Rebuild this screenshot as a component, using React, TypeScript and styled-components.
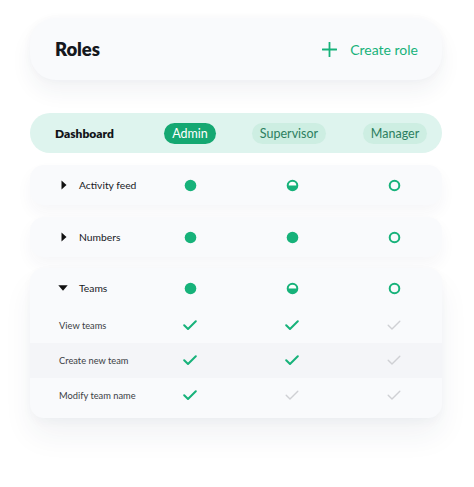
import React from "react";
import styled, { createGlobalStyle } from "styled-components";

const Global = createGlobalStyle`
  html, body { margin: 0; padding: 0; background: #ffffff; }
  body { font-family: "Lato", "Noto Sans", sans-serif; -webkit-font-smoothing: antialiased; }
`;

const GREEN = "#17b27a";

const Page = styled.div`
  width: 474px;
  height: 487px;
  box-sizing: border-box;
  padding: 18px 32px 0 30px;
  display: flex;
  flex-direction: column;
  overflow: hidden;
`;

const TitleCard = styled.div`
  height: 62px;
  border-radius: 26px;
  background: #f9fafc;
  box-shadow: 0 12px 22px rgba(40, 50, 90, 0.06), 0 0 10px rgba(40, 50, 90, 0.03);
  display: flex;
  align-items: center;
  justify-content: space-between;
  padding: 0 24px 0 25px;
  margin-bottom: 33px;
`;

const Title = styled.h1`
  margin: 0;
  font-size: 18.5px;
  font-weight: 800;
  color: #15171c;
  letter-spacing: -0.1px;
`;

const CreateButton = styled.button`
  border: none;
  background: none;
  padding: 0;
  display: flex;
  align-items: center;
  gap: 13px;
  font-family: inherit;
  font-size: 14px;
  color: ${GREEN};
  cursor: pointer;
`;

const HeaderBar = styled.div`
  height: 40px;
  border-radius: 20px;
  background: #def4ee;
  display: grid;
  grid-template-columns: 84px 102px 102px 102px;
  align-items: center;
  padding-left: 25px;
  margin-bottom: 12px;
`;

const HeaderLabel = styled.div`
  font-size: 12px;
  font-weight: 800;
  color: #111318;
`;

const Pill = styled.div<{ $active?: boolean; $shift?: number }>`
  justify-self: center;
  height: 21px;
  padding: 0 8px;
  border-radius: 11px;
  display: flex;
  align-items: center;
  font-size: 12.5px;
  margin-left: ${(p) => (p.$shift ?? 0) * 2}px;
  background: ${(p) => (p.$active ? "#15a872" : "#cdeee2")};
  color: ${(p) => (p.$active ? "#ffffff" : "#2c7e60")};
`;

const Card = styled.div<{ $gap?: number; $last?: boolean }>`
  border-radius: 14px;
  background: #f9fafc;
  box-shadow: ${(p) =>
    p.$last
      ? "0 18px 30px rgba(40, 50, 90, 0.06), 0 4px 10px rgba(40, 50, 90, 0.03)"
      : "0 8px 16px rgba(40, 50, 90, 0.045)"};
  margin-bottom: ${(p) => p.$gap ?? 12}px;
  display: flex;
  flex-direction: column;
  padding-bottom: ${(p) => (p.$last ? 5 : 0)}px;
`;

const MainRow = styled.div`
  height: 40px;
  display: grid;
  grid-template-columns: 78px 102px 102px 102px;
  align-items: center;
  padding-left: 31px;
`;

const SubRow = styled.div<{ $shaded?: boolean }>`
  height: 35px;
  display: grid;
  grid-template-columns: 80px 102px 102px 102px;
  align-items: center;
  padding-left: 29px;
  background: ${(p) => (p.$shaded ? "#f4f5f8" : "transparent")};
`;

const RowLabel = styled.div`
  display: flex;
  align-items: center;
  font-size: 10.3px;
  color: #17191e;
  white-space: nowrap;
`;

const Caret = styled.span`
  width: 18px;
  display: inline-flex;
  align-items: center;
`;

const SubLabel = styled.div`
  font-size: 9.3px;
  color: #3b3e44;
  white-space: nowrap;
`;

const Cell = styled.div`
  display: flex;
  justify-content: center;
  align-items: center;
`;

type Level = "full" | "half" | "none";

const Dot = ({ level }: { level: Level }) => (
  <svg width="13" height="13" viewBox="0 0 13 13">
    {level === "full" && <circle cx="6.5" cy="6.5" r="5.8" fill={GREEN} />}
    {level === "none" && <circle cx="6.5" cy="6.5" r="4.8" fill="none" stroke={GREEN} strokeWidth="2" />}
    {level === "half" && (
      <>
        <circle cx="6.5" cy="6.5" r="4.8" fill="#fff" stroke={GREEN} strokeWidth="2" />
        <path d="M1.7 6.5 A4.8 4.8 0 0 0 11.3 6.5 Z" fill={GREEN} />
      </>
    )}
  </svg>
);

const Check = ({ on }: { on: boolean }) => (
  <svg width="14" height="11" viewBox="0 0 14 11">
    <path
      d="M1.2 5.2 L5 9 L12.8 1.2"
      fill="none"
      stroke={on ? GREEN : "#cfd0d4"}
      strokeWidth={on ? 2 : 1.4}
      strokeLinecap="round"
      strokeLinejoin="round"
    />
  </svg>
);

const RightCaret = () => (
  <svg width="6" height="10" viewBox="0 0 6 10">
    <path d="M0.5 0.5 L5.5 5 L0.5 9.5 Z" fill="#111" />
  </svg>
);

const DownCaret = () => (
  <svg width="10" height="6" viewBox="0 0 10 6" style={{ marginLeft: -3 }}>
    <path d="M0.3 0.3 L9.7 0.3 L5 5.7 Z" fill="#111" />
  </svg>
);

const Plus = () => (
  <svg width="15" height="15" viewBox="0 0 15 15">
    <path d="M7.5 0.5 V14.5 M0.5 7.5 H14.5" stroke={GREEN} strokeWidth="1.8" strokeLinecap="round" />
  </svg>
);

const mainRows: { label: string; levels: Level[] }[] = [
  { label: "Activity feed", levels: ["full", "half", "none"] },
  { label: "Numbers", levels: ["full", "full", "none"] },
];

const subRows: { label: string; checks: boolean[] }[] = [
  { label: "View teams", checks: [true, true, false] },
  { label: "Create new team", checks: [true, true, false] },
  { label: "Modify team name", checks: [true, false, false] },
];

export default function App() {
  return (
    <>
      <Global />
      <Page>
        <TitleCard>
          <Title>Roles</Title>
          <CreateButton>
            <Plus />
            Create role
          </CreateButton>
        </TitleCard>

        <HeaderBar>
          <HeaderLabel>Dashboard</HeaderLabel>
          <Pill $active>Admin</Pill>
          <Pill $shift={-3}>Supervisor</Pill>
          <Pill $shift={1}>Manager</Pill>
        </HeaderBar>

        {mainRows.map((r, i) => (
          <Card key={r.label} $gap={i === 0 ? 12 : 11}>
            <MainRow>
              <RowLabel>
                <Caret>
                  <RightCaret />
                </Caret>
                {r.label}
              </RowLabel>
              {r.levels.map((l, j) => (
                <Cell key={j}>
                  <Dot level={l} />
                </Cell>
              ))}
            </MainRow>
          </Card>
        ))}

        <Card $gap={0} $last>
          <MainRow>
            <RowLabel>
              <Caret>
                <DownCaret />
              </Caret>
              Teams
            </RowLabel>
            {(["full", "half", "none"] as Level[]).map((l, j) => (
              <Cell key={j}>
                <Dot level={l} />
              </Cell>
            ))}
          </MainRow>
          {subRows.map((s, i) => (
            <SubRow key={s.label} $shaded={i === 1}>
              <SubLabel>{s.label}</SubLabel>
              {s.checks.map((c, j) => (
                <Cell key={j}>
                  <Check on={c} />
                </Cell>
              ))}
            </SubRow>
          ))}
        </Card>
      </Page>
    </>
  );
}
